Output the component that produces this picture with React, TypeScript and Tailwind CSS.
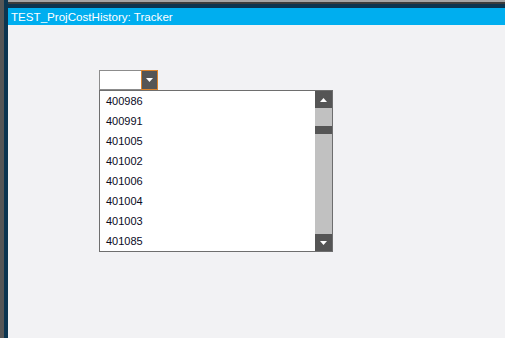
import React from "react";

const items = ["400986", "400991", "401005", "401002", "401006", "401004", "401003", "401085"];

const Arrow: React.FC<{ up?: boolean }> = ({ up }) => (
  <svg width="7" height="4" viewBox="0 0 7 4" className="block">
    {up ? <polygon points="0,4 7,4 3.5,0" fill="#fff" /> : <polygon points="0,0 7,0 3.5,4" fill="#fff" />}
  </svg>
);

export default function App() {
  return (
    <div className="flex h-[338px] w-[505px] overflow-hidden bg-[#f2f2f4] font-['Liberation_Sans',Arial,sans-serif]">
      {/* window frame, left edge */}
      <div className="w-[4px] shrink-0 bg-[#565656]" />
      <div className="w-[4px] shrink-0 bg-[#0c3550]" />
      <div className="flex min-w-0 flex-1 flex-col">
        {/* frame, top edge */}
        <div className="h-[2px] bg-[#a4a4a4]" />
        <div className="h-[2px] bg-[#3c3c3c]" />
        <div className="h-[4px] bg-[#0c3550]" />
        <div className="flex h-[17px] items-center bg-[#00aeef] pl-[3px] text-[11.6px] text-white">
          TEST_ProjCostHistory: Tracker
        </div>

        <div className="pl-[91px] pt-[45px]">
          {/* combo */}
          <div className="flex">
            <div className="h-[20px] w-[42px] border border-r-0 border-[#8c8c8c] bg-white" />
            <div className="flex h-[20px] w-[17px] items-center justify-center border border-[#d9822b] bg-[#555555]">
              <Arrow />
            </div>
          </div>
          {/* dropdown list */}
          <div className="flex h-[162px] w-[234px] border border-[#6e6e6e] bg-white">
            <div className="flex-1 text-[11px] text-[#0a0a1e]">
              {items.map((it) => (
                <div key={it} className="flex h-[20px] items-center pl-[6px]">
                  {it}
                </div>
              ))}
            </div>
            <div className="flex w-[17px] flex-col bg-[#c1c1c1]">
              <div className="flex h-[17px] items-center justify-center bg-[#555555]">
                <Arrow up />
              </div>
              <div className="h-[18px]" />
              <div className="h-[8px] bg-[#555555]" />
              <div className="flex-1" />
              <div className="flex h-[17px] items-center justify-center bg-[#555555]">
                <Arrow />
              </div>
            </div>
          </div>
        </div>
      </div>
    </div>
  );
}
